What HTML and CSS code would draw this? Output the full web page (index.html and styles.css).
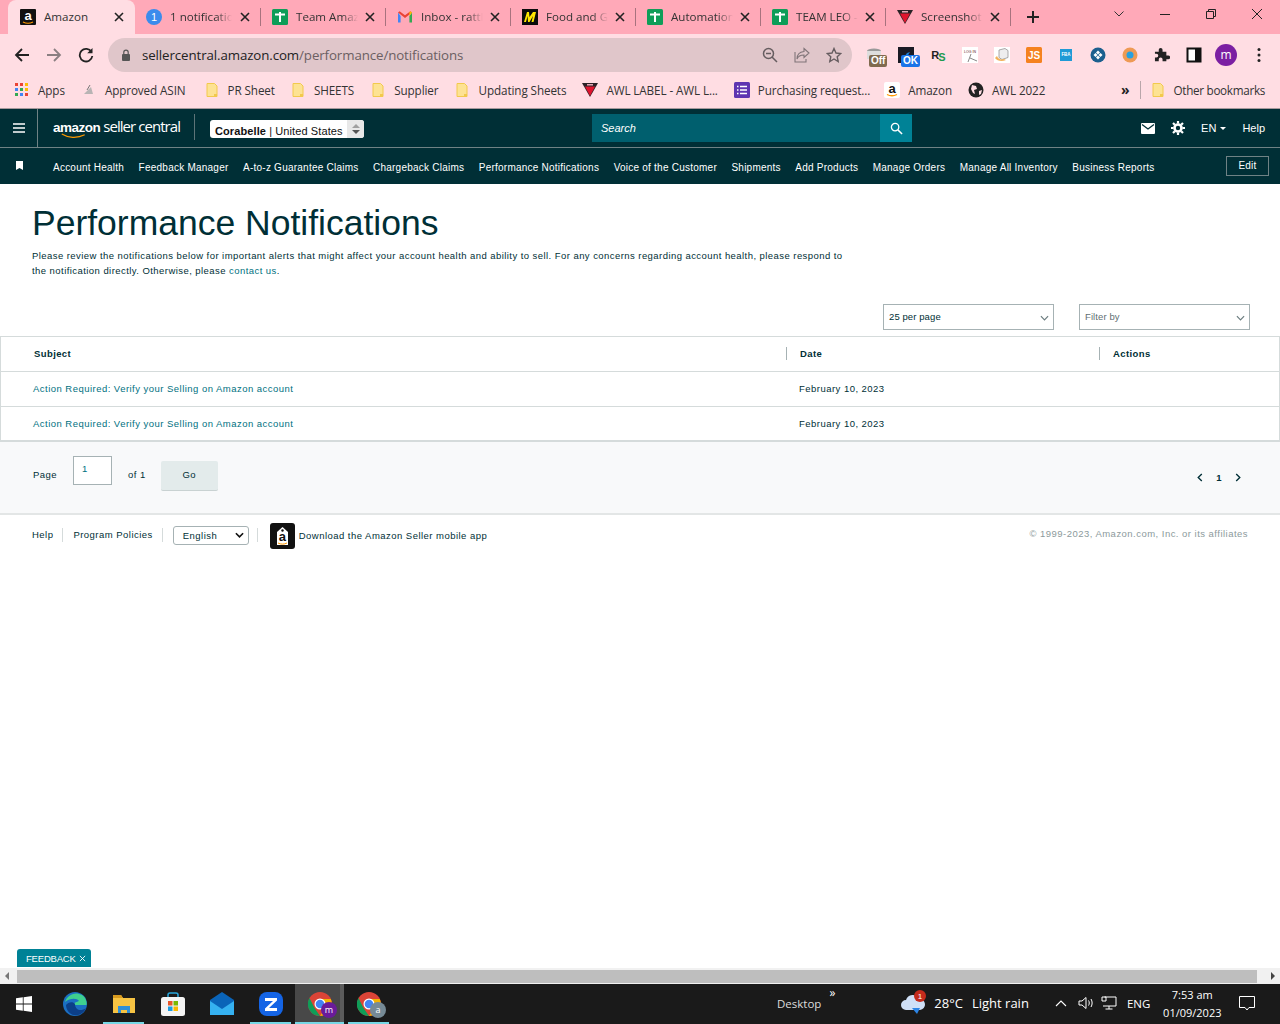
FILE: index.html
```html
<!DOCTYPE html>
<html lang="en">
<head>
<meta charset="utf-8">
<title>Performance Notifications</title>
<link rel="stylesheet" href="styles.css">
</head>
<body>
<svg class="defs" width="0" height="0" aria-hidden="true">
  <symbol id="sheet" viewBox="0 0 16 16"><rect width="16" height="16" rx="1.5" fill="#0f9d58"/><path d="M3 5.5h10M8 3v10" stroke="#fff" stroke-width="2" fill="none"/></symbol>
  <symbol id="close" viewBox="0 0 10 10"><path d="M1 1l8 8M9 1l-8 8" stroke="#222" stroke-width="1.6" fill="none"/></symbol>
  <symbol id="folder" viewBox="0 0 16 16"><path d="M3 1.5h7.5l2.5 2.5v10.5H3z" fill="#fde293" stroke="#f2c94c" stroke-width="1"/><path d="M10 12h3v2.5h-3z" fill="#f2c94c"/></symbol>
  <symbol id="awl" viewBox="0 0 16 16"><path d="M0 1h16L8 15z" fill="#2a2226"/><path d="M3 4.500h10L8 14z" fill="#e0142e"/><path d="M5 2h6v1.500H5z" fill="#e6a6b4"/></symbol>
</svg>

<div class="tabstrip">
  <div class="tab active"><svg class="fav" viewBox="0 0 16 16"><rect width="16" height="16" rx="1" fill="#111"/><text x="8" y="11" class="fav-a">a</text><path d="M3 13c3 1.500 7 1.500 10 0" stroke="#f90" stroke-width="1.200" fill="none"/></svg><span class="tab-title">Amazon</span><svg class="tab-x"><use href="#close"/></svg></div>
  <div class="tab"><svg class="fav" viewBox="0 0 16 16"><circle cx="8" cy="8" r="8" fill="#3b8bec"/><text x="8" y="12" class="fav-1">1</text></svg><span class="tab-title">1 notification</span><svg class="tab-x"><use href="#close"/></svg></div>
  <div class="tab"><svg class="fav"><use href="#sheet"/></svg><span class="tab-title">Team Amazon</span><svg class="tab-x"><use href="#close"/></svg></div>
  <div class="tab"><svg class="fav" viewBox="0 0 16 16"><path d="M1 3.500v10h2.600V7z" fill="#4285f4"/><path d="M15 3.500v10h-2.600V7z" fill="#34a853"/><path d="M1 3.500L8 9l7-5.500-1.600-1.200L8 6.300 2.600 2.300z" fill="#ea4335"/><path d="M15 3.500l-2.600 3.400V3l1-.7z" fill="#fbbc04"/></svg><span class="tab-title">Inbox - rattle</span><svg class="tab-x"><use href="#close"/></svg></div>
  <div class="tab"><svg class="fav" viewBox="0 0 16 16"><rect width="16" height="16" fill="#0b0b0b"/><path d="M2 13L5 3h2l.5 5L11 3h3l-2.500 10h-2L11 7l-3.500 6H6L5.500 7 4 13z" fill="#ffe600"/></svg><span class="tab-title">Food and Grocery</span><svg class="tab-x"><use href="#close"/></svg></div>
  <div class="tab"><svg class="fav"><use href="#sheet"/></svg><span class="tab-title">Automation</span><svg class="tab-x"><use href="#close"/></svg></div>
  <div class="tab"><svg class="fav"><use href="#sheet"/></svg><span class="tab-title">TEAM LEO - </span><svg class="tab-x"><use href="#close"/></svg></div>
  <div class="tab"><svg class="fav"><use href="#awl"/></svg><span class="tab-title">Screenshot</span><svg class="tab-x"><use href="#close"/></svg></div>
  <svg class="newtab" viewBox="0 0 14 14"><path d="M7 1v12M1 7h12" stroke="#222" stroke-width="2" fill="none"/></svg>
  <div class="winctl">
    <svg viewBox="0 0 12 12"><path d="M1.500 3.500L6 8l4.500-4.500" stroke="#333" fill="none"/></svg>
    <svg viewBox="0 0 12 12"><path d="M1 6.500h10" stroke="#222" fill="none"/></svg>
    <svg viewBox="0 0 12 12"><path d="M1.500 3.500h7v7h-7zM3.500 3.500v-2h7v7h-2" stroke="#222" fill="none"/></svg>
    <svg viewBox="0 0 12 12"><path d="M1 1l10 10M11 1L1 11" stroke="#222" fill="none"/></svg>
  </div>
</div>

<div class="toolbar">
  <svg class="tb-ico" viewBox="0 0 16 16"><path d="M15 8H2M8 2L2 8l6 6" stroke="#222" stroke-width="1.800" fill="none"/></svg>
  <svg class="tb-ico" viewBox="0 0 16 16"><path d="M1 8h13M8 2l6 6-6 6" stroke="#8b7f82" stroke-width="1.800" fill="none"/></svg>
  <svg class="tb-ico" viewBox="0 0 16 16"><path d="M13.500 5A6.300 6.300 0 1 0 14.300 9" stroke="#222" stroke-width="1.800" fill="none"/><path d="M14.500 1v5.300H9.200z" fill="#222"/></svg>
  <div class="omnibox">
    <svg class="lock" viewBox="0 0 10 12"><rect x="1" y="5" width="8" height="7" rx="1" fill="#555"/><path d="M2.800 5V3.300a2.200 2.200 0 0 1 4.400 0V5" stroke="#555" stroke-width="1.200" fill="none"/></svg>
    <span class="url"><span class="url-host">sellercentral.amazon.com</span>/performance/notifications</span>
    <div class="omni-icons">
      <svg viewBox="0 0 16 16"><circle cx="6.500" cy="6.500" r="5" stroke="#665d60" stroke-width="1.500" fill="none"/><path d="M4 6.500h5M10 10l5 5" stroke="#665d60" stroke-width="1.500" fill="none"/></svg>
      <svg viewBox="0 0 16 16"><path d="M10 1.500L15 6l-5 4.500V8C6 8 4 9.500 3 12c0-4 2.500-7 7-7.500zM1 5v10h11v-3" stroke="#807579" stroke-width="1.100" fill="none"/></svg>
      <svg viewBox="0 0 16 16"><path d="M8 1.500l2 4.500 4.800.5-3.600 3.200 1 4.800L8 12l-4.200 2.500 1-4.800L1.200 6.500 6 6z" stroke="#665d60" stroke-width="1.400" fill="none"/></svg>
    </div>
  </div>
  <div class="exts">
    <div class="ext ext-off"><svg viewBox="0 0 16 16"><ellipse cx="8" cy="4" rx="7" ry="2.500" fill="#9a9a9a"/><path d="M1 4h14v8H1z" fill="#ddd"/></svg><span class="ext-badge badge-off">Off</span></div>
    <div class="ext ext-ok"><svg viewBox="0 0 16 16"><rect width="16" height="16" fill="#1a1a24"/><path d="M4 13l5-7 3-1-3 5z" fill="#1e7fd6"/></svg><span class="ext-badge badge-ok">OK</span></div>
    <div class="ext"><span class="rs">R<i>S</i></span></div>
    <div class="ext"><svg viewBox="0 0 16 16"><rect width="16" height="16" fill="#fff"/><text x="8" y="6" class="loginfav">LOG IN</text><path d="M6 15L9 7M8 11l7 3" stroke="#888" fill="none"/></svg></div>
    <div class="ext"><svg viewBox="0 0 16 16"><rect width="16" height="16" fill="#fff"/><path d="M5 3l6-1.500 3 2v7l-6 2-3-2z" fill="#eee" stroke="#888" stroke-width=".7"/><path d="M1 11c2 3 7 4 11 2l-2-1C7 13 4 12 3 9z" fill="#f2b25a"/></svg></div>
    <div class="ext"><svg viewBox="0 0 16 16"><rect width="16" height="16" rx="1.500" fill="#f5821f"/><text x="8" y="12" class="jsfav">JS</text></svg></div>
    <div class="ext"><svg viewBox="0 0 16 16"><rect x="2" y="2" width="12" height="12" fill="#1f9ad6"/><text x="8" y="9" class="fbafav">FBA</text></svg></div>
    <div class="ext"><svg viewBox="0 0 16 16"><circle cx="8" cy="8" r="7.500" fill="#1c5f8e"/><path d="M8 3.500l2 2-2 2-2-2zM8 8.500l2 2-2 2-2-2zM3.500 8l2-2 2 2-2 2zM8.500 8l2-2 2 2-2 2z" fill="#fff"/></svg></div>
    <div class="ext"><svg viewBox="0 0 16 16"><circle cx="8" cy="8" r="7.500" fill="#ee9a55"/><circle cx="8" cy="8" r="3.500" fill="#27a0df"/></svg></div>
    <div class="ext"><svg viewBox="0 0 16 16"><path d="M1 5h4V3a2 2 0 0 1 4 0v2h4v4h2a2 2 0 0 1 0 4h-2v2H9v-2a2 2 0 0 0-4 0v2H1v-4h1.500a2 2 0 0 0 0-4H1z" fill="#222" transform="scale(.95)"/></svg></div>
    <div class="ext"><svg viewBox="0 0 16 16"><path d="M1.500 1.500h13v13h-13zM10 1.500v13" stroke="#111" stroke-width="2" fill="#fff"/><rect x="10" y="1.500" width="4.500" height="13" fill="#111"/></svg></div>
    <span class="avatar">m</span>
    <svg class="kebab" viewBox="0 0 4 16"><circle cx="2" cy="2.500" r="1.500" fill="#222"/><circle cx="2" cy="8" r="1.500" fill="#222"/><circle cx="2" cy="13.500" r="1.500" fill="#222"/></svg>
  </div>
</div>

<div class="bookmarks">
  <div class="bm bm-apps"><svg class="bm-ico" viewBox="0 0 14 14"><g><rect x="0" y="0" width="3" height="3" fill="#ea4335"/><rect x="5" y="0" width="3" height="3" fill="#ea4335"/><rect x="10" y="0" width="3" height="3" fill="#fbbc04"/><rect x="0" y="5" width="3" height="3" fill="#4285f4"/><rect x="5" y="5" width="3" height="3" fill="#34a853"/><rect x="10" y="5" width="3" height="3" fill="#fbbc04"/><rect x="0" y="10" width="3" height="3" fill="#34a853"/><rect x="5" y="10" width="3" height="3" fill="#4285f4"/><rect x="10" y="10" width="3" height="3" fill="#ea4335"/></g></svg>Apps</div>
  <div class="bm bm-asin"><svg class="bm-ico" viewBox="0 0 16 16"><path d="M3 12L10 5l2 7z" fill="#b8b4b4"/><path d="M9 3l-3 5" stroke="#777" fill="none"/></svg>Approved ASIN</div>
  <div class="bm bm-pr"><svg class="bm-ico"><use href="#folder"/></svg>PR Sheet</div>
  <div class="bm bm-sh"><svg class="bm-ico"><use href="#folder"/></svg>SHEETS</div>
  <div class="bm bm-su"><svg class="bm-ico"><use href="#folder"/></svg>Supplier</div>
  <div class="bm bm-up"><svg class="bm-ico"><use href="#folder"/></svg>Updating Sheets</div>
  <div class="bm bm-awl"><svg class="bm-ico"><use href="#awl"/></svg>AWL LABEL - AWL L...</div>
  <div class="bm bm-pu"><svg class="bm-ico" viewBox="0 0 16 16"><rect width="16" height="16" rx="1.500" fill="#5e35b1"/><path d="M6 4.500h7M6 8h7M6 11.500h7M3 4.500h1.500M3 8h1.500M3 11.500h1.500" stroke="#fff" stroke-width="1.500" fill="none"/></svg>Purchasing request...</div>
  <div class="bm bm-am"><svg class="bm-ico" viewBox="0 0 16 16"><rect width="16" height="16" rx="2" fill="#fff"/><text x="8" y="10.500" class="fav-a dark">a</text><path d="M3 12.500c3 1.500 7 1.500 10 0" stroke="#f90" stroke-width="1.300" fill="none"/></svg>Amazon</div>
  <div class="bm bm-22"><svg class="bm-ico" viewBox="0 0 16 16"><circle cx="8" cy="8" r="7.500" fill="#222"/><path d="M4 3l4 1 1 3-3 1 1 4-2-1-2-4zM11 9l3-1-1 4-2 1z" fill="#ffdde3"/></svg>AWL 2022</div>
  <span class="bm-more">»</span>
  <span class="bm-sep"></span>
  <div class="bm bm-other"><svg class="bm-ico"><use href="#folder"/></svg>Other bookmarks</div>
</div>

<div class="viewport">
  <header class="sc-head">
    <div class="sc-top">
      <div class="burger"><svg viewBox="0 0 12 10"><path d="M0 1h12M0 5h12M0 9h12" stroke="#fff" stroke-width="1.500" fill="none"/></svg></div>
      <div class="logo"><span class="logo-a">amazon</span><span class="logo-b">seller central</span><svg class="smile" viewBox="0 0 34 7"><path d="M1 1c8 5 20 6 30 1" stroke="#f90" stroke-width="1.500" fill="none"/></svg></div>
      <div class="acct"><span class="acct-name"><b>Corabelle</b> | United States</span><span class="spin"><i class="up"></i><i class="down"></i></span></div>
      <div class="search"><span class="search-in">Search</span><span class="search-btn"><svg viewBox="0 0 14 14"><circle cx="5.500" cy="5.500" r="4" stroke="#fff" stroke-width="1.400" fill="none"/><path d="M8.500 8.500l4.500 4.500" stroke="#fff" stroke-width="1.600" fill="none"/></svg></span></div>
      <div class="sc-right">
        <svg class="mail" viewBox="0 0 14 11"><rect width="14" height="11" rx="1" fill="#fff"/><path d="M1 1.500l6 4.500 6-4.500" stroke="#002f36" stroke-width="1.300" fill="none"/></svg>
        <svg class="gear" viewBox="0 0 14 14"><circle cx="7" cy="7" r="3.500" stroke="#fff" stroke-width="2.600" fill="none"/><path d="M7 0v2.500M7 11.500V14M0 7h2.500M11.500 7H14M2 2l1.800 1.800M10.200 10.200L12 12M2 12l1.800-1.800M10.200 3.800L12 2" stroke="#fff" stroke-width="2.200" fill="none"/></svg>
        <span class="lang">EN</span><i class="caret"></i>
        <span class="help">Help</span>
      </div>
    </div>
    <nav class="sc-nav">
      <svg class="bookmark" viewBox="0 0 7 9"><path d="M0 0h7v9L3.500 7 0 9z" fill="#fff"/></svg>
      <a>Account Health</a><a>Feedback Manager</a><a>A-to-z Guarantee Claims</a><a>Chargeback Claims</a><a>Performance Notifications</a><a>Voice of the Customer</a><a>Shipments</a><a>Add Products</a><a>Manage Orders</a><a>Manage All Inventory</a><a>Business Reports</a>
      <span class="edit">Edit</span>
    </nav>
  </header>

  <main class="content">
    <h1>Performance Notifications</h1>
    <p class="intro">Please review the notifications below for important alerts that might affect your account health and ability to sell. For any concerns regarding account health, please respond to the notification directly. Otherwise, please <a>contact us</a>.</p>
    <div class="filters">
      <div class="dd dd-page"><span>25 per page</span><svg viewBox="0 0 10 6"><path d="M1 1l4 4 4-4" stroke="#6b7c7f" stroke-width="1.300" fill="none"/></svg></div>
      <div class="dd dd-filter"><span>Filter by</span><svg viewBox="0 0 10 6"><path d="M1 1l4 4 4-4" stroke="#6b7c7f" stroke-width="1.300" fill="none"/></svg></div>
    </div>
    <div class="table">
      <div class="row head"><div class="c1">Subject</div><div class="c2">Date</div><div class="c3">Actions</div></div>
      <div class="row"><div class="c1"><a>Action Required: Verify your Selling on Amazon account</a></div><div class="c2">February 10, 2023</div><div class="c3"></div></div>
      <div class="row"><div class="c1"><a>Action Required: Verify your Selling on Amazon account</a></div><div class="c2">February 10, 2023</div><div class="c3"></div></div>
    </div>
    <div class="pager">
      <span class="p-label">Page</span>
      <span class="p-input">1</span>
      <span class="p-of">of 1</span>
      <span class="p-go">Go</span>
      <div class="p-nums">
        <svg viewBox="0 0 6 10"><path d="M5 1L1 5l4 4" stroke="#002f36" stroke-width="1.500" fill="none"/></svg>
        <b>1</b>
        <svg viewBox="0 0 6 10"><path d="M1 1l4 4-4 4" stroke="#002f36" stroke-width="1.500" fill="none"/></svg>
      </div>
    </div>
    <footer class="foot">
      <span class="f-link f-help">Help</span>
      <span class="f-link f-pol">Program Policies</span>
      <div class="f-lang"><span>English</span><svg viewBox="0 0 10 6"><path d="M1 1l4 4 4-4" stroke="#111" stroke-width="1.800" fill="none"/></svg></div>
      <span class="f-sep"></span>
      <svg class="f-app" viewBox="0 0 25 26"><rect width="25" height="26" rx="3" fill="#111"/><path d="M7 9l5.500-5L18 9v13H7z" fill="#fff"/><circle cx="12.500" cy="7.500" r="1.200" fill="#111"/><text x="12.500" y="18" class="f-a">a</text><path d="M8 20c3 1.500 6 1.500 9 0" stroke="#f90" fill="none"/></svg>
      <span class="f-dl">Download the Amazon Seller mobile app</span>
      <span class="f-copy">© 1999-2023, Amazon.com, Inc. or its affiliates</span>
    </footer>
    <div class="feedback">FEEDBACK <svg viewBox="0 0 8 8"><path d="M1 1l6 6M7 1L1 7" stroke="#fff" fill="none"/></svg></div>
  </main>

  <div class="hscroll"><i class="arrow-l"></i><span class="thumb"></span><i class="arrow-r"></i></div>
</div>

<div class="taskbar">
  <svg class="win" viewBox="0 0 16 16"><path d="M0 2.300l6.800-1v6.300H0zM7.600 1.200L16 0v7.600H7.600zM0 8.400h6.800v6.300l-6.800-1zM7.600 8.400H16V16l-8.400-1.200z" fill="#fff"/></svg>
  <div class="task t-edge"><svg viewBox="0 0 24 24"><circle cx="12" cy="12" r="12" fill="#1b6fc2"/><path d="M2 10C4 3 12-1 19 3c4 2.500 5 7 4.500 10H11c0-3 3-3 5-4-2-3-9-3-14 1z" fill="#3fd08f"/><path d="M12 12c0 6 6 8 11 4-2 5-7 8-12 7-4-.5-8-5-8-10 2-3 7-4 9-1z" fill="#0c3f88"/></svg></div>
  <div class="task t-on"><svg viewBox="0 0 24 24"><path d="M1 3h8l2 3h12v15H1z" fill="#f6c343"/><path d="M1 3h8l2 3H1z" fill="#d79a1f"/><path d="M6 21v-7h12v7h-3v-3H9v3z" fill="#2f8fd8"/></svg></div>
  <div class="task t-store"><svg viewBox="0 0 24 24"><path d="M7 5V3a2 2 0 0 1 2-2h6a2 2 0 0 1 2 2v2" stroke="#27a7dc" stroke-width="1.500" fill="none"/><rect y="5" width="24" height="19" rx="2.500" fill="#f4f4f4"/><rect x="7" y="9" width="4.500" height="4.500" fill="#e8562a"/><rect x="12.500" y="9" width="4.500" height="4.500" fill="#7ab800"/><rect x="7" y="14.500" width="4.500" height="4.500" fill="#1b9de2"/><rect x="12.500" y="14.500" width="4.500" height="4.500" fill="#fbb800"/></svg></div>
  <div class="task t-mail"><svg viewBox="0 0 24 24"><path d="M0 8L12 0l12 8v15H0z" fill="#0a64b8"/><path d="M0 9l12 8 12-8v14H0z" fill="#35b1f0"/></svg></div>
  <div class="task t-on t-zoho"><svg viewBox="0 0 24 24"><rect width="24" height="24" rx="8" fill="#1464e5"/><path d="M6 6h12v2.500L10 16h8v3H6v-2.500L14 9H6z" fill="#fff"/></svg></div>
  <div class="task t-on t-active"><svg class="chrome" viewBox="0 0 24 24"><circle cx="12" cy="12" r="12" fill="#db4437"/><path d="M1.500 6l5 10 5.500 8a12 12 0 0 1-10.500-18z" fill="#0f9d58"/><path d="M12 7h10.800A12 12 0 0 1 12 24l5-8z" fill="#f4b400"/><circle cx="12" cy="12" r="5.500" fill="#fff"/><circle cx="12" cy="12" r="4.300" fill="#4285f4"/></svg><span class="tb-badge purple">m</span></div>
  <div class="task t-on"><svg class="chrome" viewBox="0 0 24 24"><circle cx="12" cy="12" r="12" fill="#db4437"/><path d="M1.500 6l5 10 5.500 8a12 12 0 0 1-10.500-18z" fill="#0f9d58"/><path d="M12 7h10.800A12 12 0 0 1 12 24l5-8z" fill="#f4b400"/><circle cx="12" cy="12" r="5.500" fill="#fff"/><circle cx="12" cy="12" r="4.300" fill="#4285f4"/></svg><span class="tb-badge grey">a</span></div>
  <div class="tray">
    <span class="desk">Desktop</span><span class="desk-more">»</span>
    <div class="weather"><svg viewBox="0 0 26 26"><path d="M6 20a5 5 0 0 1 0-10 7 7 0 0 1 13-1 5.500 5.500 0 0 1 1 11z" fill="#cfe0f7"/><path d="M12 18h8l-3 6z" fill="#2d85e6"/><circle cx="20" cy="6" r="6" fill="#c42b1c"/><text x="20" y="9" class="wx-n">1</text></svg></div>
    <span class="temp">28°C</span><span class="rain">Light rain</span>
    <svg class="t-ico chev" viewBox="0 0 12 8"><path d="M1 7l5-5 5 5" stroke="#fff" stroke-width="1.100" fill="none"/></svg>
    <svg class="t-ico vol" viewBox="0 0 16 14"><path d="M1 5h3l4-3.500v11L4 9H1zM10.500 4.500c1 1.500 1 3.500 0 5M13 3c1.500 2.500 1.500 5.500 0 8" stroke="#fff" fill="none"/></svg>
    <svg class="t-ico net" viewBox="0 0 16 14"><path d="M3.500 1H15v9H2M1 1h4v4H1zM8 10v3M4.500 13h7" stroke="#fff" fill="none"/></svg>
    <span class="eng">ENG</span>
    <div class="clock"><span>7:53 am</span><span>01/09/2023</span></div>
    <svg class="t-ico note" viewBox="0 0 16 15"><path d="M.5.500h15v11H10l-2 2.500-2-2.500H.5z" stroke="#fff" fill="none"/></svg>
  </div>
</div>
</body>
</html>
```

FILE: styles.css
```css
* { box-sizing: border-box; }
html, body { margin: 0; padding: 0; }
body { width: 1280px; height: 1024px; overflow: hidden; display: flex; flex-direction: column; background: #fff; font-family: "Liberation Sans", Arial, sans-serif; color: #002f36; }
.defs { display: block; height: 0; }
svg { display: block; flex: none; }

/* Chrome tabs */
.tabstrip { height: 34px; flex: none; background: #ffa9b8; display: flex; align-items: flex-end; padding-left: 8px; font-family: "Open Sans", sans-serif; font-size: 11.6px; color: #333; }
.tab { width: 125px; height: 34px; display: flex; align-items: center; padding: 0 0 1px 11px; position: relative; }
.tab:nth-child(2) { width: 126px; }
.tab:nth-child(n+3) .tab-x { margin-left: 7px; }
.tab::after { content: ""; position: absolute; right: 0; top: 8px; height: 18px; width: 1px; background: #a8727e; }
.tab.active { width: 127px; height: 34px; background: #ffdde3; border-radius: 8px 8px 0 0; padding-left: 12px; }
.tab.active::after { display: none; }
.fav { width: 16px; height: 16px; margin-right: 8px; }
.tab-title { width: 62px; white-space: nowrap; overflow: hidden; -webkit-mask-image: linear-gradient(to right, #000 75%, transparent 100%); mask-image: linear-gradient(to right, #000 75%, transparent 100%); }
.active .tab-title { -webkit-mask-image: none; mask-image: none; width: 62px; }
.tab-x { width: 10px; height: 10px; margin-left: 8px; }
.fav-a { font: bold 13px "Liberation Sans", sans-serif; fill: #fff; text-anchor: middle; }
.fav-a.dark { fill: #111; }
.fav-1 { font: 11px "Liberation Sans", sans-serif; fill: #fff; text-anchor: middle; }
.newtab { width: 14px; height: 14px; margin: 0 0 10px 15px; }
.winctl { display: flex; align-items: flex-start; margin-left: 73px; height: 34px; padding-top: 8px; gap: 34px; }
.winctl svg { width: 12px; height: 12px; }

/* Toolbar */
.toolbar { height: 42px; flex: none; background: #ffdde3; display: flex; align-items: center; padding-left: 14px; }
.tb-ico { width: 16px; height: 16px; margin-right: 16px; }
.omnibox { width: 744px; height: 34px; margin-left: -2px; border-radius: 17px; background: #e0c6ca; display: flex; align-items: center; padding-left: 13px; font-family: "Open Sans", sans-serif; font-size: 13.300px; color: #6b5f62; }
.lock { width: 10px; height: 12px; margin-right: 11px; }
.url { white-space: nowrap; letter-spacing: -.1px; }
.url-host { color: #222; }
.omni-icons { margin-left: auto; display: flex; gap: 16px; padding-right: 10px; }
.omni-icons svg { width: 16px; height: 16px; }
.exts { display: flex; align-items: center; margin-left: 14px; }
.ext { width: 16px; height: 16px; margin-right: 16px; position: relative; }
.ext svg { width: 16px; height: 16px; }
.ext-badge { position: absolute; font: bold 10px/10px "Liberation Sans", sans-serif; color: #fff; padding: 1px 2px; border-radius: 2px; left: 3px; top: 8px; }
.badge-off { background: #806a4f; }
.badge-ok { background: #1a73e8; }
.rs { font: bold 11px/16px "Liberation Sans", sans-serif; color: #222; display: block; text-align: center; letter-spacing: -1px; }
.rs i { color: #1c9a4e; font-style: normal; position: relative; top: 2px; }
.loginfav { font: 3.500px "Liberation Sans", sans-serif; fill: #622; text-anchor: middle; }
.jsfav { font: bold 10px "Liberation Sans", sans-serif; fill: #fff; text-anchor: middle; }
.fbafav { font: bold 4.500px "Liberation Sans", sans-serif; fill: #fff; text-anchor: middle; }
.avatar { width: 22px; height: 22px; border-radius: 50%; background: #7b1fa2; color: #fff; font: 12px/21px "Open Sans", sans-serif; text-align: center; margin-left: -3px; margin-right: 20px; }
.kebab { width: 4px; height: 16px; }

/* Bookmarks */
.bookmarks { height: 33px; flex: none; background: #ffdde3; border-bottom: 1px solid #a89a9d; display: flex; align-items: center; padding: 0 15px 5px 15px; font-family: "Open Sans", sans-serif; font-size: 11.700px; color: #333; white-space: nowrap; letter-spacing: -.1px; }
.bm { display: flex; align-items: center; margin-right: 16px; }
.bm-ico { width: 16px; height: 16px; margin-right: 8px; }
.bm-apps .bm-ico { width: 14px; height: 14px; margin-right: 9px; }
.bm-apps { margin-right: 16px; }
.bm-asin { margin-right: 18px; }
.bm-pr { margin-right: 15px; }
.bm-pu { margin-right: 14px; }
.bm-more { margin-left: auto; font-weight: 700; font-size: 14px; color: #222; }
.bm-sep { width: 1px; height: 18px; background: #b9a6aa; margin: 0 9px 0 10px; }
.bm-other { margin-right: 0; letter-spacing: -.3px; }
.bm-22 { margin-right: 0; }

/* Viewport */
.viewport { flex: 1; min-height: 0; display: flex; flex-direction: column; }

/* Seller Central header */
.sc-head { flex: none; background: #002f36; color: #fff; }
.sc-top { height: 39px; border-bottom: 1px solid #6f8285; display: flex; align-items: center; }
.burger { width: 38px; height: 38px; border-right: 1px solid #6f8285; display: flex; align-items: center; justify-content: center; }
.burger svg { width: 12px; height: 10px; }
.logo { margin-left: 15px; width: 142px; margin-top: -2px; white-space: nowrap; position: relative; display: flex; align-items: baseline; height: 26px; line-height: 24px; border-right: 1px solid #5d7478; }
.logo-a { font: bold 13.500px/24px "Liberation Sans", sans-serif; letter-spacing: -.5px; margin-right: 3px; }
.logo-b { font: 15px/24px "Open Sans", sans-serif; letter-spacing: -.95px; }
.smile { position: absolute; left: 8px; top: 19px; width: 26px; height: 6px; }
.acct { margin-left: 15px; width: 154px; height: 18px; margin-top: 2px; padding-left: 5px; background: #fff; border-radius: 3px; color: #111; font-size: 11px; line-height: 14px; display: flex; align-items: center; justify-content: space-between; letter-spacing: .1px; white-space: nowrap; }
.acct-name { padding-top: 3px; }
.acct b { font-weight: 700; }
.spin { width: 17px; height: 18px; background: #e8e8e8; border-radius: 0 3px 3px 0; display: flex; flex-direction: column; align-items: center; justify-content: center; gap: 2px; }
.spin .up { border: 4px solid transparent; border-top: 0; border-bottom: 4px solid #a0a0a0; }
.spin .down { border: 4px solid transparent; border-bottom: 0; border-top: 4px solid #555; }
.search { margin-left: 228px; width: 320px; height: 28px; background: #005f6e; display: flex; align-items: center; justify-content: space-between; }
.search-in { padding-left: 9px; font-size: 11px; font-style: italic; color: #fff; }
.search-btn { width: 32px; height: 28px; background: #008296; display: flex; align-items: center; justify-content: center; }
.search-btn svg { width: 13px; height: 13px; }
.sc-right { margin-left: auto; display: flex; align-items: center; padding-right: 15px; font-size: 11px; }
.mail { width: 14px; height: 11px; margin-right: 16px; }
.gear { width: 14px; height: 14px; margin-right: 16px; }
.lang { font-size: 11px; margin-right: 4px; }
.caret { border: 3px solid transparent; border-top: 3px solid #fff; border-bottom: 0; margin-right: 16px; }
.sc-nav { height: 36px; display: flex; align-items: center; padding: 3px 0 0 16px; font-size: 10px; white-space: nowrap; }
.bookmark { width: 7px; height: 9px; margin: -5px 30px 0 0; }
.sc-nav a { margin-right: 14.500px; letter-spacing: .235px; color: #fff; }
.edit { margin: -4px 11px 0 auto; width: 43px; height: 20px; border: 1px solid #6f8285; font-size: 10px; line-height: 18px; text-align: center; letter-spacing: .02em; }

/* Content */
.content { flex: 1; min-height: 0; display: flex; flex-direction: column; position: relative; }
h1 { margin: 19px 0 0 32px; font-size: 35.500px; line-height: 40px; font-weight: 400; color: #002f36; }
.intro { margin: 5px 0 0 32px; width: 818px; font-size: 9.500px; line-height: 15px; letter-spacing: .44px; color: #002f36; }
.intro a, .row a { color: #00717f; }
.filters { display: flex; justify-content: flex-end; margin-top: 26px; padding-right: 30px; gap: 25px; }
.dd { height: 26px; border: 1px solid #a6b2b4; display: flex; align-items: center; justify-content: space-between; font-size: 9.500px; padding: 0 4px 1px 5px; letter-spacing: .01em; }
.dd svg { width: 9px; height: 6px; margin-top: 2px; }
.dd-page { width: 171px; color: #002f36; }
.dd-filter { width: 171px; color: #5f6f72; }
.table { margin-top: 6px; border-top: 1px solid #d5dbdb; border-left: 1px solid #d5dbdb; border-right: 1px solid #d5dbdb; border-bottom: 2px solid #d5dbdb; }
.row { display: flex; align-items: center; height: 35px; padding-bottom: 1px; font-size: 9.500px; letter-spacing: .47px; border-top: 1px solid #d5dbdb; }
.row.head { border-top: 0; height: 34px; font-weight: 700; letter-spacing: .4px; }
.row:last-child { height: 34px; }
.c1 { width: 785px; padding-left: 32px; }
.c2 { width: 313px; padding-left: 13px; }
.c3 { flex: 1; padding-left: 13px; }
.head .c1 { padding-left: 33px; }
.head .c2, .head .c3 { height: 13px; line-height: 13px; border-left: 1px solid #a6b2b4; }
.pager { height: 73px; background: #f8f9fa; border-bottom: 2px solid #e3e6e6; display: flex; align-items: flex-start; padding-left: 33px; font-size: 9.500px; letter-spacing: .47px; flex: none; }
.p-label { margin-top: 27px; }
.p-input { width: 39px; height: 29px; margin: 14px 0 0 16px; border: 1px solid #a6b2b4; background: #fff; padding: 6px 0 0 8px; color: #00717f; }
.p-of { margin: 27px 0 0 16px; }
.p-go { width: 57px; height: 30px; margin: 19px 0 0 15px; background: #e3ebeb; border-bottom: 1px solid #c9d2d2; border-radius: 2px; text-align: center; line-height: 27px; }
.p-nums { margin: 30px 39px 0 auto; display: flex; align-items: center; gap: 13px; }
.p-nums svg { width: 6px; height: 9px; }
.foot { height: 40px; display: flex; align-items: center; font-size: 9.500px; letter-spacing: .47px; padding-left: 32px; flex: none; }
.f-link { padding-right: 9px; margin-right: 10px; height: 14px; line-height: 14px; border-right: 1px solid #d5dbdb; }
.f-lang { width: 76px; height: 19px; border: 1px solid #a6b2b4; border-radius: 3px; display: flex; align-items: center; justify-content: space-between; padding: 0 4px 0 9px; }
.f-lang svg { width: 9px; height: 6px; }
.f-sep { width: 1px; height: 14px; background: #d5dbdb; margin: 0 12px 0 8px; }
.f-app { width: 25px; height: 26px; margin-top: 2px; }
.f-a { font: bold 13px "Liberation Sans", sans-serif; fill: #111; text-anchor: middle; }
.f-dl { margin-left: 4px; }
.f-copy { margin: -4px 32px 0 auto; color: #8c9a9c; }
.feedback { position: absolute; left: 17px; bottom: 1px; width: 74px; height: 18px; background: #008296; border-radius: 3px 3px 0 0; color: #fff; font-size: 9.500px; letter-spacing: -.2px; display: flex; align-items: center; gap: 3px; padding-left: 9px; }
.feedback svg { width: 7px; height: 7px; }

/* Scrollbar + taskbar */
.hscroll { height: 16px; flex: none; background: #f1f1f1; display: flex; align-items: center; justify-content: space-between; padding: 0 5px; }
.thumb { height: 13px; flex: 1; margin: 0 14px 0 8px; background: #bebebe; }
.arrow-l { border: 4px solid transparent; border-right: 4px solid #777; border-left: 0; }
.arrow-r { border: 4px solid transparent; border-left: 4px solid #444; border-right: 0; }
.taskbar { height: 40px; flex: none; background: #1a1a1a; display: flex; align-items: stretch; color: #fff; font-family: "Open Sans", sans-serif; font-size: 12px; }
.win { width: 16px; height: 16px; margin: 12px 0 0 16px; }
.task { width: 49px; position: relative; display: flex; justify-content: center; padding-top: 8px; }
.task svg { width: 24px; height: 24px; }
.t-edge { margin-left: 18px; }
.t-on::after { content: ""; position: absolute; left: 4px; right: 4px; bottom: 0; height: 2px; background: #76d7e5; }
.t-active { background: #484848; box-shadow: inset -4px 0 0 #5c5c5c; }
.t-active::after { left: 0; right: 0; }
.tb-badge { position: absolute; left: 26px; top: 18px; width: 16px; height: 16px; border-radius: 50%; font-size: 9px; line-height: 15px; text-align: center; }
.purple { background: #6a1b9a; }
.grey { background: #768a96; }
.tray { flex: 1; display: flex; align-items: center; padding-bottom: 2px; }
.desk { margin-left: 384px; color: #ddd; font-size: 11.500px; }
.desk-more { align-self: flex-start; margin: 1px 0 0 8px; line-height: 16px; }
.weather { margin-left: 65px; }
.weather svg { width: 26px; height: 26px; }
.wx-n { font: 8px "Liberation Sans", sans-serif; fill: #fff; text-anchor: middle; }
.temp { margin-left: 8px; font-size: 13px; }
.rain { margin-left: 9px; font-size: 13px; }
.t-ico { flex: none; }
.chev { width: 12px; height: 8px; margin-left: 26px; }
.vol { width: 16px; height: 14px; margin-left: 11px; }
.net { width: 16px; height: 14px; margin-left: 7px; }
.eng { margin-left: 10px; font-size: 11.500px; }
.clock { margin: 2px 0 0 12px; display: flex; flex-direction: column; align-items: center; line-height: 18px; width: 60px; font-size: 11px; }
.note { width: 16px; height: 15px; margin-left: 17px; }
```
